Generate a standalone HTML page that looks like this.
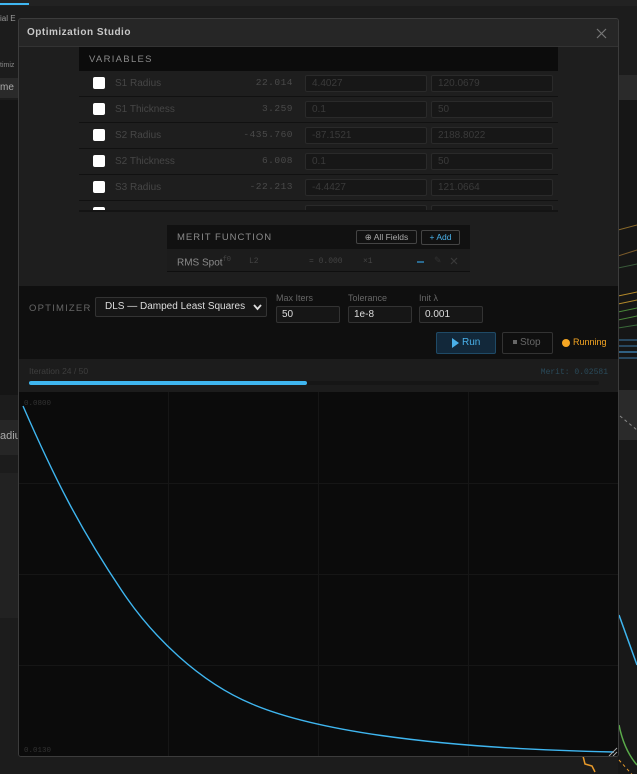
<!DOCTYPE html>
<html><head><meta charset="utf-8"><style>
*{box-sizing:border-box;margin:0;padding:0}
body{width:637px;height:774px;overflow:hidden;background:#1c1c1c;position:relative;font-family:"Liberation Sans",sans-serif}
.a{position:absolute}
.mono{font-family:"Liberation Mono",monospace}
.row{position:absolute;left:0;width:479px;height:26px;border-bottom:1px solid #111}
.cb{position:absolute;left:14px;top:6px;width:12px;height:12px;background:#fff;border-radius:2px}
.lbl{position:absolute;left:36px;top:7px;font-size:10px;color:#464646}
.val{position:absolute;right:265px;top:6px;font-size:9.5px;color:#4a4a4a;letter-spacing:.5px}
.in{position:absolute;top:4px;height:17px;background:#171717;border:1px solid #2a2a2a;border-radius:2px;font-size:10px;color:#3a3a3a;padding:2px 6px}
.fld{position:absolute;height:17px;background:#161616;border:1px solid #333;border-radius:2px;font-size:10px;color:#ddd;padding:2px 5px}
.flab{position:absolute;font-size:9px;color:#666}
</style></head><body>
<div class="a" style="left:0;top:0;width:637px;height:6px;background:#222"></div>
<div class="a" style="left:0;top:3px;width:29px;height:2px;background:#3fb6f0"></div>
<div class="a" style="left:0;top:14px;font-size:8px;color:#999">ial E</div>
<div class="a" style="left:0;top:62px;font-size:7px;color:#888">timiz</div>
<div class="a" style="left:0;top:78px;width:18px;height:20px;background:#2a2a2a;font-size:10px;color:#aaa;padding-top:4px">me</div>
<div class="a" style="left:0;top:100px;width:18px;height:295px;background:#151515"></div>
<div class="a" style="left:0;top:420px;width:18px;height:35px;background:#262626;font-size:11px;color:#aaa;padding-top:10px">adiu</div>
<div class="a" style="left:0;top:473px;width:18px;height:145px;background:#222"></div>
<div class="a" style="left:618px;top:75px;width:19px;height:25px;background:#2a2a2a"></div>
<div class="a" style="left:618px;top:100px;width:19px;height:290px;background:#161616"></div>
<div class="a" style="left:618px;top:390px;width:19px;height:50px;background:#2a2a2a"></div>
<div class="a" style="left:618px;top:440px;width:19px;height:334px;background:#181818"></div>
<svg class="a" style="left:618px;top:100px" width="19" height="674">
<g stroke-width="1"><line x1="0" y1="130" x2="19" y2="125" stroke="#8a6a2a"/><line x1="0" y1="156" x2="19" y2="150" stroke="#7a5a2a"/><line x1="0" y1="168" x2="19" y2="164" stroke="#3a5a3a"/>
<line x1="0" y1="196" x2="19" y2="192" stroke="#b58a2a"/><line x1="0" y1="204" x2="19" y2="200" stroke="#b58a2a"/><line x1="0" y1="212" x2="19" y2="208" stroke="#4a8a3a"/><line x1="0" y1="220" x2="19" y2="216" stroke="#4a8a3a"/><line x1="0" y1="228" x2="19" y2="225" stroke="#3a6a3a"/>
<line x1="0" y1="240" x2="19" y2="240" stroke="#3a7aaa"/><line x1="0" y1="246" x2="19" y2="246" stroke="#3a7aaa"/><line x1="0" y1="252" x2="19" y2="252" stroke="#4aaaee"/><line x1="0" y1="258" x2="19" y2="258" stroke="#3a7aaa"/></g>
<path d="M2 316 L19 330" stroke="#888" stroke-dasharray="3,3"/>
<path d="M1 515 L19 565" stroke="#3fb6f0" stroke-width="1.5"/>
<path d="M1 625 Q6 650 19 665" stroke="#5aaa4a" stroke-width="1.5" fill="none"/>
<path d="M1 660 L19 680" stroke="#e89a2a" stroke-dasharray="3,3"/>
</svg>
<svg class="a" style="left:560px;top:756px" width="60" height="18"><path d="M23 0 L25 8 L32 10 L35 16" stroke="#e89a2a" fill="none" stroke-width="1.5"/></svg>

<div class="a" style="left:18px;top:18px;width:601px;height:739px;background:#1e1e1e;border:1px solid #3c3c3c;border-radius:3px;overflow:hidden">
 <div class="a" style="left:0;top:0;width:600px;height:28px;background:#262626;border-bottom:1px solid #333"></div>
 <div class="a" style="left:8px;top:8px;font-size:10px;font-weight:bold;color:#c8c8c8;letter-spacing:.5px">Optimization Studio</div>
 <svg class="a" style="left:577px;top:9px" width="11" height="11"><path d="M1 1L10 10M10 1L1 10" stroke="#777" stroke-width="1.2"/></svg>

 <div class="a" style="left:60px;top:28px;width:479px;height:165px;overflow:hidden">
  <div class="a" style="left:0;top:0;width:479px;height:24px;background:#0c0c0c"></div>
  <div class="a" style="left:10px;top:7px;font-size:9.5px;color:#8a8a8a;letter-spacing:1.3px">VARIABLES</div>
  <div class="row" style="top:24px"><div class="cb"></div><div class="lbl">S1 Radius</div><div class="val mono">22.014</div><div class="in" style="left:226px;width:122px">4.4027</div><div class="in" style="left:352px;width:122px">120.0679</div></div>
  <div class="row" style="top:50px"><div class="cb"></div><div class="lbl">S1 Thickness</div><div class="val mono">3.259</div><div class="in" style="left:226px;width:122px">0.1</div><div class="in" style="left:352px;width:122px">50</div></div>
  <div class="row" style="top:76px"><div class="cb"></div><div class="lbl">S2 Radius</div><div class="val mono">-435.760</div><div class="in" style="left:226px;width:122px">-87.1521</div><div class="in" style="left:352px;width:122px">2188.8022</div></div>
  <div class="row" style="top:102px"><div class="cb"></div><div class="lbl">S2 Thickness</div><div class="val mono">6.008</div><div class="in" style="left:226px;width:122px">0.1</div><div class="in" style="left:352px;width:122px">50</div></div>
  <div class="row" style="top:128px"><div class="cb"></div><div class="lbl">S3 Radius</div><div class="val mono">-22.213</div><div class="in" style="left:226px;width:122px">-4.4427</div><div class="in" style="left:352px;width:122px">121.0664</div></div>
  <div class="row" style="top:154px;border:none"><div class="cb"></div><div class="in" style="left:226px;width:122px"></div><div class="in" style="left:352px;width:122px"></div></div>
  <div class="a" style="left:0;top:163px;width:479px;height:2px;background:#141414"></div>
 </div>

 <div class="a" style="left:148px;top:206px;width:303px;height:24px;background:#111"></div>
 <div class="a" style="left:158px;top:213px;font-size:9.5px;color:#8a8a8a;letter-spacing:1px">MERIT FUNCTION</div>
 <div class="a" style="left:337px;top:211px;width:61px;height:14px;border:1px solid #444;border-radius:2px;font-size:8.5px;color:#aaa;text-align:center;line-height:12px">⊕ All Fields</div>
 <div class="a" style="left:402px;top:211px;width:39px;height:15px;border:1px solid #444;border-radius:2px;font-size:8.5px;color:#4ab0e8;text-align:center;line-height:13px">+ Add</div>
 <div class="a" style="left:148px;top:230px;width:303px;height:23px;background:#1c1c1c;border-bottom:1px solid #0f0f0f"></div>
 <div class="a" style="left:158px;top:237px;font-size:10px;color:#8a8a8a">RMS Spot<sup class="mono" style="font-size:7px;color:#444">f0</sup></div>
 <div class="a mono" style="left:230px;top:238px;font-size:8px;color:#444">L2</div>
 <div class="a mono" style="left:290px;top:238px;font-size:8px;color:#444">= 0.000</div>
 <div class="a mono" style="left:344px;top:238px;font-size:8px;color:#444">×1</div>
 <div class="a" style="left:398px;top:242px;width:7px;height:2px;background:#2a6a90"></div>
 <div class="a" style="left:415px;top:236px;font-size:9px;color:#333">✎</div>
 <svg class="a" style="left:431px;top:238px" width="8" height="8"><path d="M1 1L7 7M7 1L1 7" stroke="#3a3a3a" stroke-width="1.2"/></svg>

 <div class="a" style="left:0;top:267px;width:600px;height:73px;background:#0f0f0f"></div>
 <div class="a" style="left:10px;top:284px;font-size:9.5px;color:#666;letter-spacing:1.2px">OPTIMIZER</div>
 <div class="a" style="left:76px;top:278px;width:172px;height:20px;background:#161616;border:1px solid #333;border-radius:2px;font-size:10px;color:#ddd;padding:3px 0 0 9px">DLS — Damped Least Squares<svg class="a" style="left:157px;top:6px" width="9" height="7"><path d="M1 1L4.5 5L8 1" stroke="#ddd" stroke-width="1.8" fill="none"/></svg></div>
 <div class="flab" style="left:257px;top:274px">Max Iters</div>
 <div class="flab" style="left:329px;top:274px">Tolerance</div>
 <div class="flab" style="left:400px;top:274px">Init λ</div>
 <div class="fld" style="left:257px;top:287px;width:64px">50</div>
 <div class="fld" style="left:329px;top:287px;width:64px">1e-8</div>
 <div class="fld" style="left:400px;top:287px;width:64px">0.001</div>
 <div class="a" style="left:417px;top:313px;width:60px;height:22px;background:#12283a;border:1px solid #1f4a66;border-radius:2px;font-size:10px;color:#4ab0e8;padding:4px 0 0 15px"><span style="position:absolute;left:15px;top:5px;width:0;height:0;border-left:7px solid #4ab0e8;border-top:5px solid transparent;border-bottom:5px solid transparent"></span><span style="margin-left:10px">Run</span></div>
 <div class="a" style="left:483px;top:313px;width:51px;height:22px;border:1px solid #333;border-radius:2px;font-size:10px;color:#666;padding:4px 0 0 10px"><span style="display:inline-block;width:4px;height:4px;background:#666;margin-right:3px;vertical-align:1px"></span>Stop</div>
 <div class="a" style="left:543px;top:320px;width:8px;height:8px;border-radius:50%;background:#f5a623"></div>
 <div class="a" style="left:554px;top:318px;font-size:9px;color:#f5a623">Running</div>

 <div class="a" style="left:0;top:340px;width:600px;height:33px;background:#1c1c1c"></div>
 <div class="a" style="left:10px;top:347px;font-size:8.5px;color:#3e3e3e">Iteration 24 / 50</div>
 <div class="a mono" style="right:10px;top:349px;font-size:8px;color:#2a4a5a">Merit: 0.02581</div>
 <div class="a" style="left:10px;top:362px;width:570px;height:4px;background:#161616;border-radius:2px"></div>
 <div class="a" style="left:10px;top:362px;width:278px;height:4px;background:#3fb6f0;border-radius:2px"></div>

 <div class="a" style="left:0;top:373px;width:600px;height:366px;background:#0b0b0b"></div>
 <svg class="a" style="left:0;top:373px" width="600" height="366">
  <g stroke="#161616" stroke-width="1">
   <line x1="149.5" y1="0" x2="149.5" y2="366"/><line x1="299.5" y1="0" x2="299.5" y2="366"/><line x1="449.5" y1="0" x2="449.5" y2="366"/>
   <line x1="0" y1="91.5" x2="600" y2="91.5"/><line x1="0" y1="182.5" x2="600" y2="182.5"/><line x1="0" y1="273.5" x2="600" y2="273.5"/>
  </g>
  <text x="5" y="13" font-family="Liberation Mono,monospace" font-size="7.5" fill="#333">0.0800</text>
  <text x="5" y="360" font-family="Liberation Mono,monospace" font-size="7.5" fill="#333">0.0130</text>
  <path d="M4 14 C35 85 60 135 103 199 C133 244 180 290 233 312 C290 336 400 356 595 360" stroke="#3fb6f0" stroke-width="1.4" fill="none"/>
  <path d="M590 364L598 356M594 364L598 360" stroke="#aaa" stroke-width="1"/>
 </svg>
</div>
</body></html>
